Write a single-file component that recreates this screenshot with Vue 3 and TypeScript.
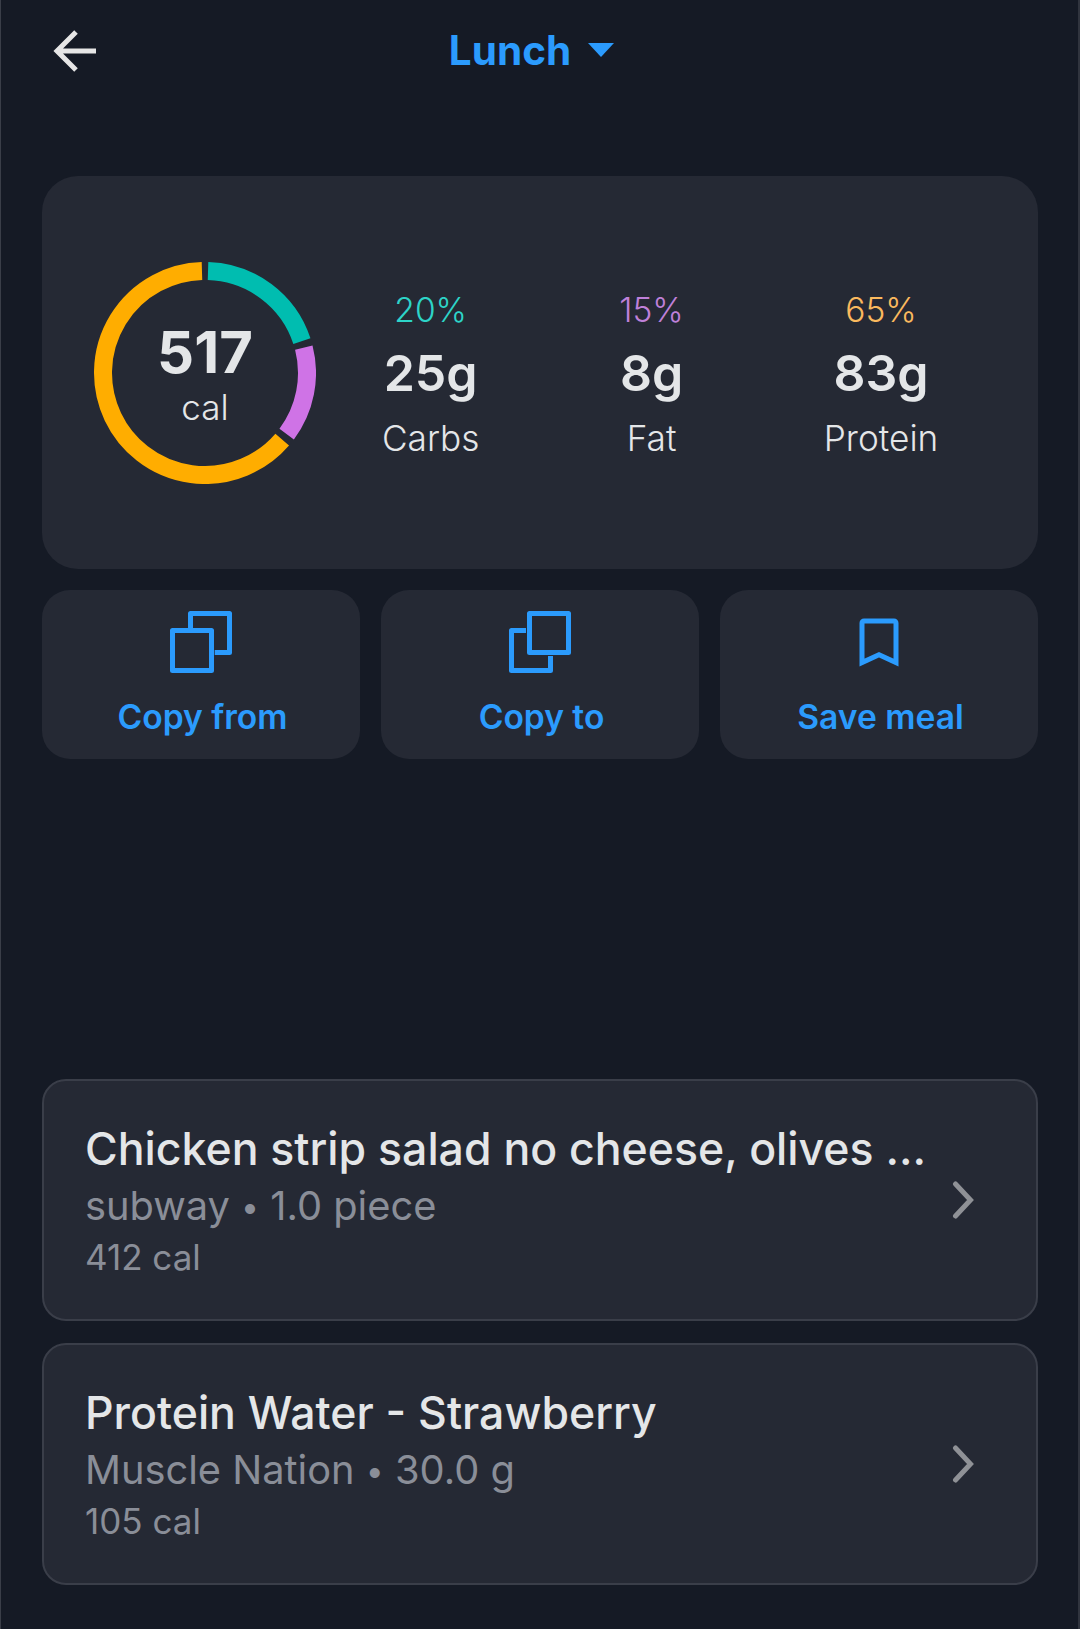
<template>
  <main class="page">
    <header class="topbar">
      <button type="button" class="back" aria-label="Back">
        <svg width="44" height="44" viewBox="0 0 44 44" fill="none">
          <path d="M43 22H5M23 3 4 22l19 19" stroke="#e6e6e6" stroke-width="5" />
        </svg>
      </button>
      <div class="meal-select">
        <span>Lunch</span>
        <svg width="26" height="14" viewBox="0 0 26 14"><path d="M0 0h26L13 14z" fill="#2b9bfd" /></svg>
      </div>
    </header>

    <section class="summary">
      <div class="ring">
        <svg width="222" height="222" viewBox="0 0 222 222" fill="none">
          <path
            v-for="seg in ringSegments"
            :key="seg.color"
            :d="seg.d"
            :stroke="seg.color"
            stroke-width="18"
          />
        </svg>
        <div class="ring-label">
          <strong>517</strong>
          <span>cal</span>
        </div>
      </div>
      <div class="macros">
        <div v-for="macro in macros" :key="macro.name" class="macro">
          <span class="pct" :class="macro.tone">{{ macro.pct }}</span>
          <strong>{{ macro.grams }}</strong>
          <span class="name">{{ macro.name }}</span>
        </div>
      </div>
    </section>

    <section class="actions">
      <button type="button" class="action">
        <svg width="62" height="62" viewBox="0 0 62 62" fill="none" stroke="#2b9bfd" stroke-width="5" stroke-linejoin="round">
          <path d="M20.5 17V2.5h39v39H44.7" />
          <rect x="2.5" y="19.5" width="39" height="40" />
        </svg>
        <span>Copy from</span>
      </button>
      <button type="button" class="action">
        <svg width="62" height="62" viewBox="0 0 62 62" fill="none" stroke="#2b9bfd" stroke-width="5" stroke-linejoin="round">
          <path d="M17 19.5H2.5v40h39V45" />
          <rect x="20.5" y="2.5" width="39" height="39" />
        </svg>
        <span>Copy to</span>
      </button>
      <button type="button" class="action">
        <svg width="62" height="62" viewBox="0 0 62 62" fill="none" stroke="#2b9bfd" stroke-width="5">
          <path d="M14 51.5V12a2 2 0 0 1 2-2h30a2 2 0 0 1 2 2v39.5L31 43.8z" />
        </svg>
        <span>Save meal</span>
      </button>
    </section>

    <section class="foods">
      <article v-for="food in foods" :key="food.title" class="food">
        <div class="food-text">
          <h3>{{ food.title }}</h3>
          <p class="meta">{{ food.brand }} <span class="dot">•</span> {{ food.amount }}</p>
          <p class="cals">{{ food.cals }}</p>
        </div>
        <svg class="chevron" width="24" height="38" viewBox="0 0 24 38" fill="none">
          <path d="M3.5 3 18.5 19 3.5 35" stroke="#8f9196" stroke-width="5" stroke-linecap="round" />
        </svg>
      </article>
    </section>
  </main>
</template>

<script setup lang="ts">
interface Macro {
  pct: string;
  grams: string;
  name: string;
  tone: string;
}

const macros: Macro[] = [
  { pct: "20%", grams: "25g", name: "Carbs", tone: "teal" },
  { pct: "15%", grams: "8g", name: "Fat", tone: "purple" },
  { pct: "65%", grams: "83g", name: "Protein", tone: "orange" },
];

const foods = [
  { title: "Chicken strip salad no cheese, olives ...", brand: "subway", amount: "1.0 piece", cals: "412 cal" },
  { title: "Protein Water - Strawberry", brand: "Muscle Nation", amount: "30.0 g", cals: "105 cal" },
];

function arc(from: number, to: number): string {
  const r = 102;
  const point = (deg: number) => {
    const rad = (deg * Math.PI) / 180;
    return `${(111 + r * Math.sin(rad)).toFixed(2)} ${(111 - r * Math.cos(rad)).toFixed(2)}`;
  };
  const large = to - from > 180 ? 1 : 0;
  return `M${point(from)}A${r} ${r} 0 ${large} 1 ${point(to)}`;
}

const ringSegments = [
  { color: "#00bdb0", d: arc(1.7, 71.8) },
  { color: "#cf73e6", d: arc(75.6, 126.8) },
  { color: "#ffad00", d: arc(130.8, 358.3) },
];
</script>

<style scoped>
.page {
  box-sizing: border-box;
  width: 1080px;
  height: 1629px;
  background: #151a25;
  border-left: 1px solid #3a3e48;
  border-right: 2px solid #30343e;
  padding: 0 40px 0 41px;
  font-family: Inter, "Noto Sans", sans-serif;
  color: #e4e6e8;
  overflow: hidden;
}

.topbar {
  position: relative;
  height: 176px;
  display: flex;
  justify-content: center;
  padding: 29px 17px 0 0;
  box-sizing: border-box;
}

.back {
  position: absolute;
  left: 11px;
  top: 29px;
  padding: 0;
  width: 44px;
  height: 44px;
  border: none;
  background: none;
}

.meal-select {
  display: flex;
  align-items: center;
  gap: 17px;
  height: 42px;
  font-size: 40.5px;
  font-weight: 700;
  color: #2b9bfd;
}

.summary {
  height: 393px;
  border-radius: 36px;
  background: #252934;
  display: flex;
  align-items: center;
  padding-left: 52px;
  gap: 66px;
}

.ring {
  display: grid;
  width: 222px;
  height: 222px;
}

.ring > * {
  grid-area: 1 / 1;
}

.ring-label {
  display: flex;
  flex-direction: column;
  align-items: center;
  justify-content: center;
  padding-top: 5px;
}

.ring-label strong {
  font-size: 58px;
  line-height: 60px;
  font-weight: 700;
}

.ring-label span {
  font-size: 35px;
  line-height: 44px;
  font-weight: 300;
  margin-top: 3px;
}

.macros {
  display: flex;
  gap: 140px;
  padding-top: 2px;
}

.macro {
  display: flex;
  flex-direction: column;
  align-items: center;
}

.pct {
  font-size: 33.5px;
  line-height: 44px;
  font-weight: 300;
}

.pct.teal {
  color: #2dd4c8;
}

.pct.purple {
  color: #bf80d9;
}

.pct.orange {
  color: #fbb95e;
}

.macro strong {
  font-size: 50px;
  line-height: 58px;
  font-weight: 600;
  margin-top: 12px;
}

.name {
  font-size: 35.2px;
  line-height: 44px;
  font-weight: 300;
  margin-top: 14px;
}

.actions {
  display: grid;
  grid-template-columns: repeat(3, 1fr);
  gap: 21px;
  margin-top: 21px;
}

.action {
  height: 169px;
  padding: 21px 0 0;
  border: none;
  border-radius: 28px;
  background: #252934;
  display: flex;
  flex-direction: column;
  align-items: center;
  font-family: inherit;
  color: #2b9bfd;
  font-size: 33.6px;
  font-weight: 600;
}

.action span {
  margin-top: 22px;
  padding-left: 3px;
  line-height: 44px;
}

.foods {
  display: flex;
  flex-direction: column;
  gap: 22px;
  margin-top: 320px;
}

.food {
  box-sizing: border-box;
  height: 242px;
  border: 2px solid #3a3e49;
  border-radius: 24px;
  background: #252934;
  display: flex;
  align-items: center;
  justify-content: space-between;
  padding: 0 60px 0 41px;
}

.food h3 {
  margin: 0;
  font-size: 44.6px;
  line-height: 58px;
  font-weight: 500;
  color: #e4e6e8;
}

.food p {
  margin: 0;
  font-weight: 400;
  color: #8a8e98;
}

.food .meta {
  font-size: 39.8px;
  line-height: 54px;
  margin-top: 1px;
}

.dot {
  font-size: 32px;
  vertical-align: 2px;
}

.food .cals {
  font-size: 35px;
  line-height: 46px;
}

.chevron {
  flex: none;
}
</style>

<style>
html,
body {
  margin: 0;
  background: #151a25;
}
</style>
